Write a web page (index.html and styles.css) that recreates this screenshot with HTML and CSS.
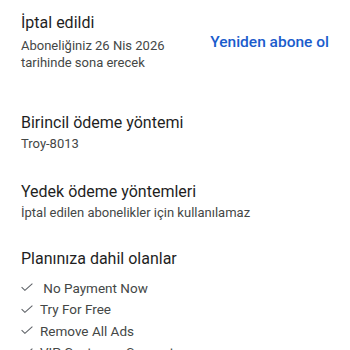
FILE: index.html
```html
<!DOCTYPE html>
<html lang="tr">
<head>
<meta charset="utf-8">
<link rel="stylesheet" href="styles.css">
</head>
<body>
<div class="page">
  <section class="status">
    <div class="status-text">
      <h2 class="title">İptal edildi</h2>
      <p class="sub sub-status">Aboneliğiniz 26 Nis 2026<br>tarihinde sona erecek</p>
    </div>
    <a class="action">Yeniden abone ol</a>
  </section>
  <section class="block block-primary">
    <h2 class="title">Birincil ödeme yöntemi</h2>
    <p class="sub">Troy-8013</p>
  </section>
  <section class="block block-backup">
    <h2 class="title">Yedek ödeme yöntemleri</h2>
    <p class="sub">İptal edilen abonelikler için kullanılamaz</p>
  </section>
  <section class="block block-plan">
    <h2 class="title">Planınıza dahil olanlar</h2>
    <ul class="features">
      <li><svg class="check" viewBox="0 0 12 8" width="12" height="8"><path d="M0.6 4.2 L3.9 7.3 L11.4 0.6" fill="none" stroke="#5f6368" stroke-width="1.1"/></svg><span>&nbsp;No Payment Now</span></li>
      <li><svg class="check" viewBox="0 0 12 8" width="12" height="8"><path d="M0.6 4.2 L3.9 7.3 L11.4 0.6" fill="none" stroke="#5f6368" stroke-width="1.1"/></svg><span>Try For Free</span></li>
      <li><svg class="check" viewBox="0 0 12 8" width="12" height="8"><path d="M0.6 4.2 L3.9 7.3 L11.4 0.6" fill="none" stroke="#5f6368" stroke-width="1.1"/></svg><span>Remove All Ads</span></li>
      <li><svg class="check" viewBox="0 0 12 8" width="12" height="8"><path d="M0.6 4.2 L3.9 7.3 L11.4 0.6" fill="none" stroke="#5f6368" stroke-width="1.1"/></svg><span>VIP Customer Support</span></li>
    </ul>
  </section>
</div>
</body>
</html>
```
FILE: styles.css
```css
html, body {
  margin: 0;
  padding: 0;
  background: #ffffff;
  overflow: hidden;
  height: 350px;
}
body {
  font-family: Roboto, "Noto Sans", sans-serif;
  color: #1f1f1f;
}
.page {
  padding: 12.5px 0 0 21px;
}
.status {
  display: flex;
  align-items: flex-start;
  justify-content: space-between;
}
.title {
  margin: 0;
  font-size: 16px;
  font-weight: 400;
  line-height: 20px;
  color: #1f1f1f;
}
.sub {
  margin: 1.5px 0 0;
  font-size: 13px;
  line-height: 17px;
  color: #444746;
}
.sub-status {
  margin-top: 4px;
}
.action {
  margin-top: 19px;
  margin-right: 21px;
  font-size: 15.5px;
  line-height: 20px;
  font-weight: 500;
  color: #1a5ccc;
}
.block-primary {
  margin-top: 42.5px;
}
.block-backup {
  margin-top: 30.5px;
}
.block-plan {
  margin-top: 28.5px;
}
.features {
  list-style: none;
  margin: 8px 0 0;
  padding: 0;
}
.features li {
  display: flex;
  align-items: center;
  height: 21.5px;
  font-size: 13.5px;
  color: #444746;
}
.check {
  flex: none;
  margin-right: 7px;
  margin-top: -1px;
}
```
